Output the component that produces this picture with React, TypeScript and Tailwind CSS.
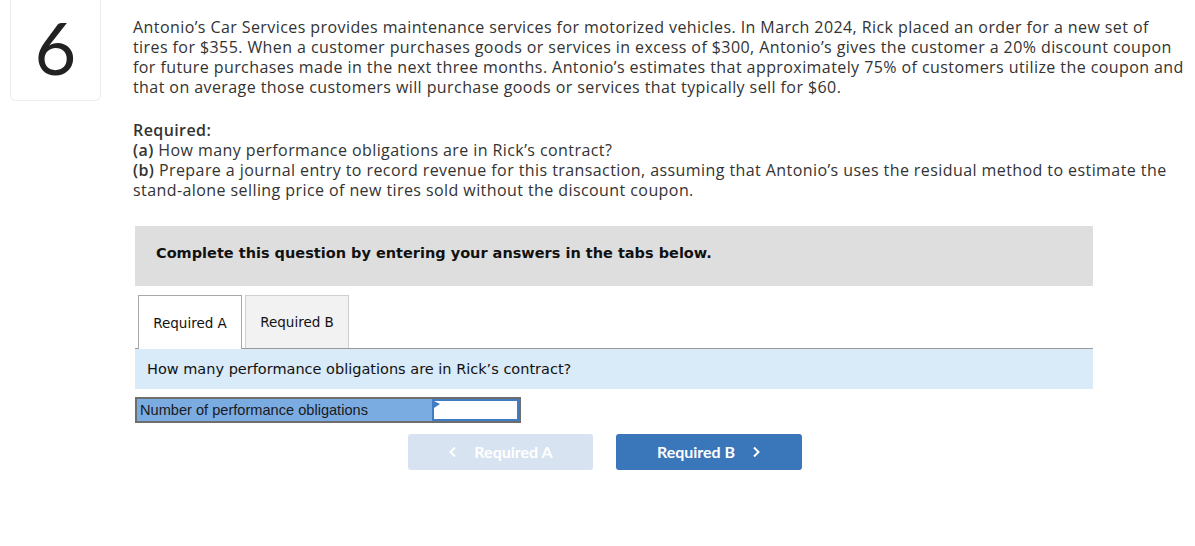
import React from "react";

export default function App() {
  const body = { fontFamily: "'Open Sans', Lato, sans-serif" };
  const tahoma = { fontFamily: "'DejaVu Sans', Verdana, sans-serif" };
  return (
    <div className="w-[1195px] h-[546px] bg-white text-[#222]" style={body}>
      <div className="flex">
        <div className="ml-[10px] w-[91px] h-[101px] border border-t-0 border-[#ececec] rounded-b-[6px] flex justify-center">
          <span className="text-[72px] leading-none mt-[11px] font-normal text-[#222]" style={{ fontFamily: "Lato, sans-serif" }}>
            6
          </span>
        </div>
        <div className="ml-[32px] pt-[17px] text-[16px] leading-[20px] text-[#333] tracking-[0.42px]">
          <p className="whitespace-nowrap">
            Antonio’s Car Services provides maintenance services for motorized vehicles. In March 2024, Rick placed an order for a new set of
            <br />
            tires for $355. When a customer purchases goods or services in excess of $300, Antonio’s gives the customer a 20% discount coupon
            <br />
            for future purchases made in the next three months. Antonio’s estimates that approximately 75% of customers utilize the coupon and
            <br />
            that on average those customers will purchase goods or services that typically sell for $60.
          </p>
          <div className="mt-[23px] whitespace-nowrap">
            <div className="font-semibold">Required:</div>
            <div>
              <span className="font-semibold">(a)</span> How many performance obligations are in Rick’s contract?
            </div>
            <div>
              <span className="font-semibold">(b)</span> Prepare a journal entry to record revenue for this transaction, assuming that Antonio’s uses the residual method to estimate the
              <br />
              stand-alone selling price of new tires sold without the discount coupon.
            </div>
          </div>

          <div className="ml-[2px] w-[958px] tracking-normal">
            <div className="mt-[26px] h-[60px] bg-[#dedede] pl-[21px] pt-[16px]">
              <span className="text-[14.5px] leading-[18px] font-bold text-[#111]" style={tahoma}>
                Complete this question by entering your answers in the tabs below.
              </span>
            </div>

            <div className="mt-[9px] flex items-end border-b border-[#9a9a9a] pl-[3px] gap-[3px]" style={tahoma}>
              <div className="w-[104px] h-[54px] -mb-px bg-white border border-b-0 border-[#a8a8a8] flex items-center justify-center text-[13.5px] text-[#111]">
                Required A
              </div>
              <div className="w-[104px] h-[53px] bg-[#f2f2f2] border border-b-0 border-[#cfcfcf] flex items-center justify-center text-[13.5px] text-[#111]">
                Required B
              </div>
            </div>

            <div className="h-[40px] bg-[#d9eaf8] flex items-center pl-[12px]" style={tahoma}>
              <span className="text-[14.5px] text-[#111]">How many performance obligations are in Rick’s contract?</span>
            </div>

            <div
              className="mt-[8px] w-[386px] h-[26px] flex border-2 border-[#6e6e6e]"
              style={{ fontFamily: "'Liberation Sans', Arial, sans-serif" }}
            >
              <div className="w-[295px] bg-[#7aace2] flex items-center pl-[3px] text-[14.6px] text-[#1a1a1a]">
                Number of performance obligations
              </div>
              <div className="relative flex-1 bg-white border-2 border-[#3f7cc3]">
                <svg className="absolute left-0 top-0" width="6" height="8" viewBox="0 0 6 8">
                  <polygon points="0,0 6,3 0,7" fill="#3f7cc3" />
                </svg>
              </div>
            </div>

            <div className="mt-[11px] pl-[273px] flex gap-[23px]" style={{ fontFamily: "Lato, sans-serif" }}>
              <div className="w-[185px] h-[36px] rounded-[3px] bg-[#d7e3f1] flex items-center justify-center text-white text-[16px] font-bold">
                <svg width="10" height="12" viewBox="0 0 10 12" className="mr-[16px]">
                  <path d="M7 1.5 L2.5 6 L7 10.5" stroke="white" strokeWidth="2" fill="none" />
                </svg>
                Required A
              </div>
              <div className="w-[186px] h-[36px] rounded-[3px] bg-[#3a76ba] flex items-center justify-center text-white text-[16px] font-bold">
                Required B
                <svg width="10" height="12" viewBox="0 0 10 12" className="ml-[16px]">
                  <path d="M3 1.5 L7.5 6 L3 10.5" stroke="white" strokeWidth="2" fill="none" />
                </svg>
              </div>
            </div>
          </div>
        </div>
      </div>
    </div>
  );
}
